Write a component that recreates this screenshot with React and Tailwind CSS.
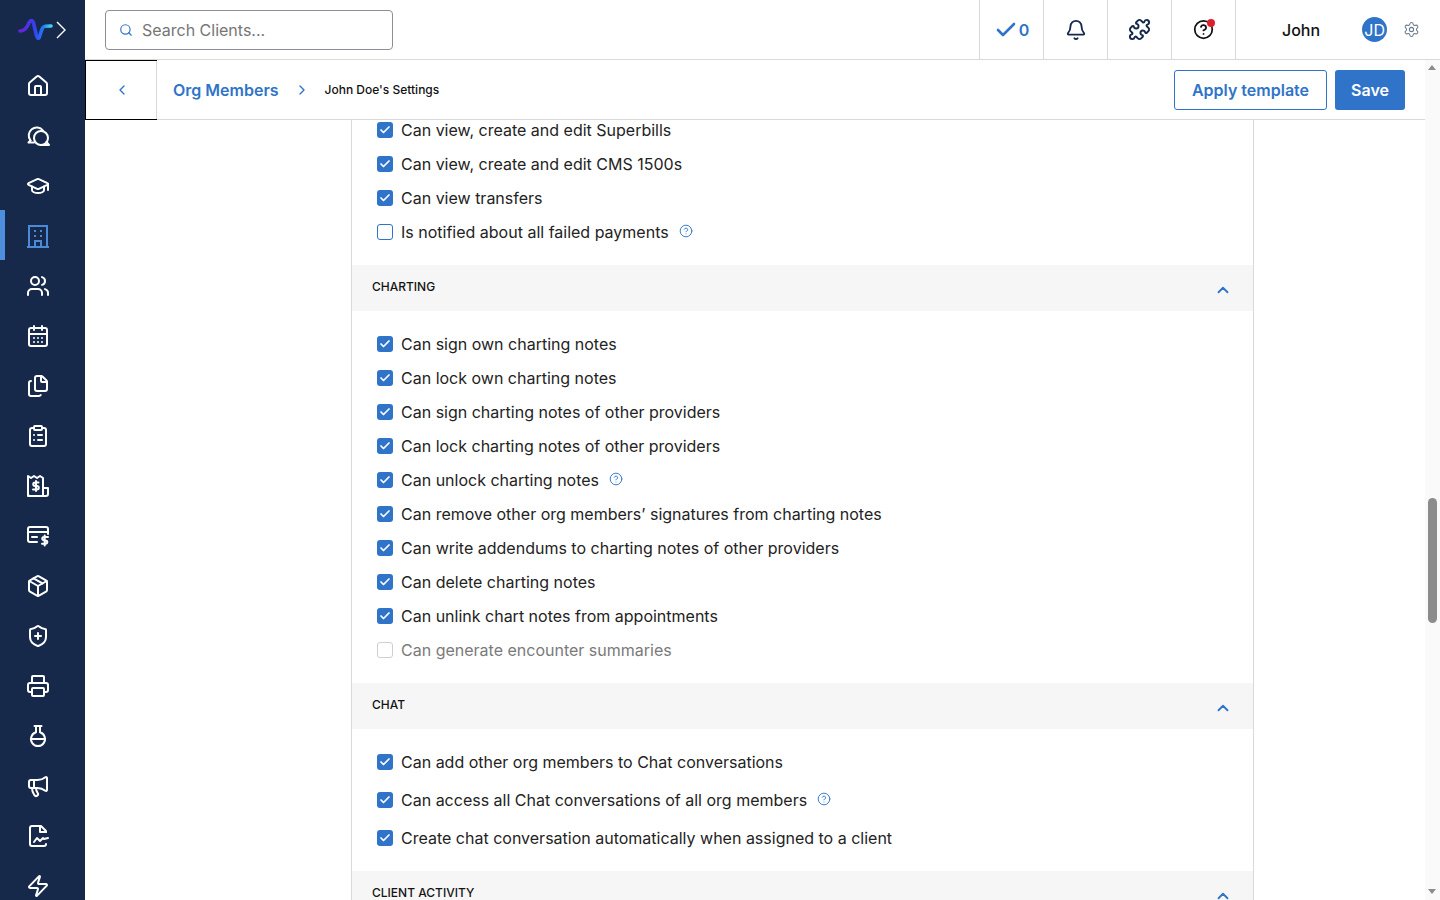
import React from "react";
import { House, GraduationCap, Users, CalendarDays, Files, ClipboardList, Package, ShieldPlus, Printer, FlaskRound, Megaphone, Zap, Bell, Puzzle, Check, Settings, Search, ChevronLeft, ChevronRight, ChevronUp, CircleHelp } from "lucide-react";

const S = { fill: "none", stroke: "currentColor", strokeWidth: 2, strokeLinecap: "round", strokeLinejoin: "round" };
const Chats = (p) => (
  <svg viewBox="0 0 24 24" {...S} {...p}>
    <path d="M4.5 16.5A8 8 0 1 1 17 6.5" />
    <circle cx="15" cy="14" r="7" />
    <path d="M15 21h8l-2.5-3" />
    <path d="M4.5 16.5 2.5 18.5H8" />
  </svg>
);
const Building = (p) => (
  <svg viewBox="0 0 24 24" {...S} {...p} strokeLinecap="butt" strokeLinejoin="miter">
    <path d="M1 23h22" />
    <path d="M3 23V2h18v21" />
    <path d="M9 23v-6h6v6" />
    <path d="M8 7h2M14 7h2M8 12h2M14 12h2" />
  </svg>
);
const Receipt = (p) => (
  <svg viewBox="0 0 24 24" {...S} {...p}>
    <path d="M2 22V2l3 2 3-2 3 2 3-2 3 2v18H4a2 2 0 0 1-2-2Z" />
    <path d="M17 14h5v6a2 2 0 0 1-2 2h-3" />
    <path d="M12.5 8.5H9a1.7 1.7 0 0 0 0 3.5h2a1.7 1.7 0 0 1 0 3.5H7M10 7v10" />
  </svg>
);
const CardDollar = (p) => (
  <svg viewBox="0 0 24 24" {...S} {...p}>
    <path d="M11 18H4a2 2 0 0 1-2-2V5a2 2 0 0 1 2-2h16a2 2 0 0 1 2 2v5" />
    <path d="M2 8h20" />
    <path d="M6 13h5" />
    <path d="M22 13h-4a1.6 1.6 0 0 0 0 3.4h1.6a1.6 1.6 0 0 1 0 3.4H16M18.7 11.5v10" />
  </svg>
);
const FileWave = (p) => (
  <svg viewBox="0 0 24 24" {...S} {...p}>
    <path d="M20 8V7l-5-5H6a2 2 0 0 0-2 2v16a2 2 0 0 0 2 2h12a2 2 0 0 0 2-2" />
    <path d="M14 2v6h6" />
    <path d="M8 18l3-4 3 3 3-3 1 1 4-1" />
  </svg>
);
const Logo = () => (
  <svg viewBox="0 0 50 30" className="w-[50px] h-[30px]" fill="none">
    <defs>
      <linearGradient id="lg" x1="0" y1="0" x2="1" y2="0">
        <stop offset="0" stopColor="#6a22d8" />
        <stop offset="0.45" stopColor="#3b3cf0" />
        <stop offset="0.75" stopColor="#1a7cf5" />
        <stop offset="1" stopColor="#4fd0f0" />
      </linearGradient>
    </defs>
    <path d="M2 16 C6 16 8 14 10 10 C12 5 14 4 15.5 8 L18 19 C19 24 21 25 22 20 L24 14 C25 11 27 11 33 11" stroke="url(#lg)" strokeWidth="3.6" strokeLinecap="round" />
    <path d="M39 7l8 8-8 8" stroke="#ffffff" strokeWidth="1.4" />
  </svg>
);

const navIcons = [
  [House], [Chats], [GraduationCap], [Building, true], [Users], [CalendarDays], [Files], [ClipboardList],
  [Receipt], [CardDollar], [Package], [ShieldPlus], [Printer], [FlaskRound], [Megaphone], [FileWave], [Zap],
];

function Row({ children, help, checked = true, disabled }) {
  return (
    <div className="h-[34px] flex items-center pl-[25px]">
      {disabled ? (
        <span className="w-4 h-4 rounded-[3px] border border-[#cfcfcf] bg-white shrink-0" />
      ) : checked ? (
        <span className="w-4 h-4 rounded-[3px] bg-[#2f74c8] flex items-center justify-center shrink-0">
          <Check size={12} strokeWidth={3.5} color="#fff" />
        </span>
      ) : (
        <span className="w-4 h-4 rounded-[3px] border border-[#2f74c8] bg-white shrink-0" />
      )}
      <span className={`ml-2 text-base leading-6 ${disabled ? "text-[#7a7a7a]" : "text-[#232323]"}`}>{children}</span>
      {help && <CircleHelp size={14} color="#2f74c8" strokeWidth={1.6} className="ml-[10px] -mt-[2px]" />}
    </div>
  );
}

function Section({ title }) {
  return (
    <div className="h-[46px] bg-[#f6f6f6] flex items-center justify-between pl-5 pr-[21px] shrink-0">
      <span className="text-xs font-medium text-[#141414] -mt-[2px]">{title}</span>
      <ChevronUp size={18} color="#2f74c8" strokeWidth={2.4} className="mt-[3px]" />
    </div>
  );
}

const Cell = ({ children, className = "" }) => (
  <div className={`w-[64px] h-full border-l border-[#d9d9d9] flex items-center justify-center ${className}`}>{children}</div>
);

export default function App() {
  return (
    <div className="flex h-screen w-full overflow-hidden bg-white text-[#232323]" style={{ fontFamily: "Inter, 'Liberation Sans', sans-serif" }}>
      <aside className="w-[85px] shrink-0 bg-[#16294a] flex flex-col overflow-hidden">
        <div className="h-[60px] shrink-0 flex items-center pl-[18px]"><Logo /></div>
        <div className="flex flex-col">
          {navIcons.map(([I, active], i) => (
            <div key={i} className={`relative h-[50px] shrink-0 flex items-center justify-center pr-[9px] pt-[1px] ${active ? "text-[#4a8ad8]" : "text-white"}`}>
              {active && <span className="absolute left-0 top-0 h-full w-[5px] bg-[#4f8edc]" />}
              <I width={24} height={24} size={24} strokeWidth={2} />
            </div>
          ))}
        </div>
      </aside>

      <div className="flex-1 min-w-0 flex flex-col">
        <header className="h-[60px] shrink-0 border-b border-[#d9d9d9] flex items-center bg-white">
          <div className="pl-5 flex-1">
            <div className="w-[288px] h-10 border border-[#8e8e98] rounded flex items-center pl-[13px]">
              <Search size={14} color="#2f74c8" strokeWidth={2} />
              <span className="ml-[9px] text-base text-[#767676]">Search Clients...</span>
            </div>
          </div>
          <Cell>
            <Check size={24} color="#2f74c8" strokeWidth={2.6} />
            <span className="text-base font-semibold text-[#2f74c8] ml-[1px]">0</span>
          </Cell>
          <Cell><Bell size={22} color="#16294a" strokeWidth={2} /></Cell>
          <Cell><Puzzle size={23} color="#16294a" strokeWidth={2} /></Cell>
          <Cell className="relative">
            <CircleHelp size={21} color="#111" strokeWidth={2} />
            <span className="absolute left-[35px] top-[19px] w-2 h-2 rounded-full bg-[#dc1f2e]" />
          </Cell>
          <div className="w-[205px] h-full border-l border-[#d9d9d9] flex items-center">
            <span className="ml-[46px] text-base font-medium text-[#111]">John</span>
            <span className="ml-[42px] w-[25px] h-[25px] rounded-full bg-[#2f74c8] text-white text-base flex items-center justify-center">JD</span>
            <Settings size={17} color="#6b7a90" strokeWidth={1.5} className="ml-[16px]" />
          </div>
        </header>

        <div className="flex-1 min-h-0 flex">
          <div className="flex-1 min-w-0 flex flex-col">
            <div className="h-[60px] shrink-0 border-b border-[#d9d9d9] flex items-center">
              <div className="w-[72px] h-[60px] border-l border-t border-b border-black border-r-0 flex items-center justify-center relative">
                <ChevronLeft size={16} color="#2f74c8" strokeWidth={2} />
                <span className="absolute right-0 top-0 bottom-0 w-px bg-[#d9d9d9]" />
              </div>
              <span className="ml-4 text-base font-semibold text-[#2f74c8]">Org Members</span>
              <ChevronRight size={16} color="#2f74c8" strokeWidth={2} className="ml-[15px]" />
              <span className="ml-[15px] text-xs font-medium text-[#111]">John Doe's Settings</span>
              <div className="ml-auto mr-5 flex gap-2">
                <button className="w-[153px] h-10 border border-[#2f74c8] rounded-[3px] text-base font-semibold text-[#2f74c8] bg-white">Apply template</button>
                <button className="w-[70px] h-10 rounded-[3px] text-base font-semibold text-white bg-[#2f74c8]">Save</button>
              </div>
            </div>
            <div className="flex-1 min-h-0 overflow-hidden">
              <div className="w-[903px] ml-[266px] -mt-[7px] border-x-2 border-[#d9d9d9] border-x-[1.5px]">
                <Row>Can view, create and edit Superbills</Row>
                <Row>Can view, create and edit CMS 1500s</Row>
                <Row>Can view transfers</Row>
                <Row checked={false} help>Is notified about all failed payments</Row>
                <div className="h-4" />
                <Section title="CHARTING" />
                <div className="h-4" />
                <Row>Can sign own charting notes</Row>
                <Row>Can lock own charting notes</Row>
                <Row>Can sign charting notes of other providers</Row>
                <Row>Can lock charting notes of other providers</Row>
                <Row help>Can unlock charting notes</Row>
                <Row>Can remove other org members’ signatures from charting notes</Row>
                <Row>Can write addendums to charting notes of other providers</Row>
                <Row>Can delete charting notes</Row>
                <Row>Can unlink chart notes from appointments</Row>
                <Row disabled>Can generate encounter summaries</Row>
                <div className="h-4" />
                <Section title="CHAT" />
                <div className="h-4" />
                <div className="flex flex-col gap-1">
                  <Row>Can add other org members to Chat conversations</Row>
                  <Row help>Can access all Chat conversations of all org members</Row>
                  <Row>Create chat conversation automatically when assigned to a client</Row>
                </div>
                <div className="h-4" />
                <Section title="CLIENT ACTIVITY" />
              </div>
            </div>
          </div>
          <div className="w-[15px] shrink-0 bg-[#fafafa] relative">
            <span className="absolute left-[3px] top-[5px] w-0 h-0 border-x-[4px] border-x-transparent border-b-[5px] border-b-[#8c8c8c]" />
            <span className="absolute left-[3px] top-[438px] w-[9px] h-[125px] rounded-full bg-[#8c8c8c]" />
            <span className="absolute left-[3px] bottom-[6px] w-0 h-0 border-x-[4px] border-x-transparent border-t-[5px] border-t-[#8c8c8c]" />
          </div>
        </div>
      </div>
    </div>
  );
}
